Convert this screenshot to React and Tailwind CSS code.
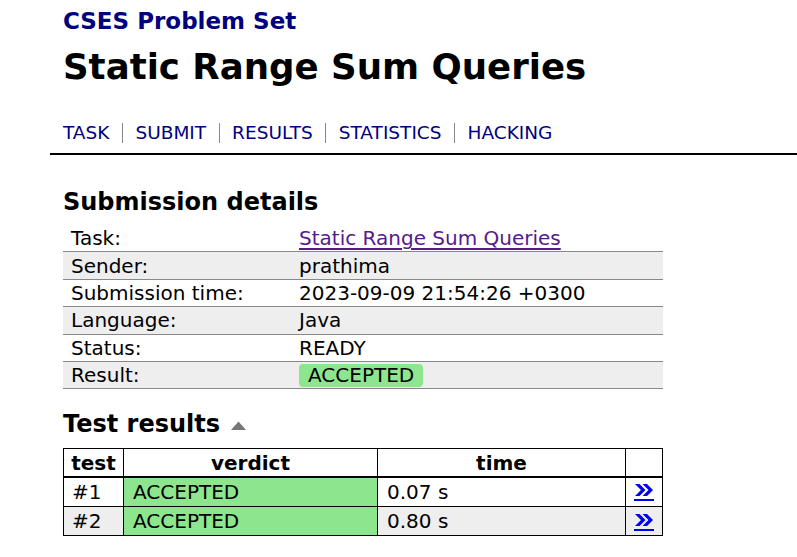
import React from "react";

const details = [
  ["Task:", "link"],
  ["Sender:", "prathima"],
  ["Submission time:", "2023-09-09 21:54:26 +0300"],
  ["Language:", "Java"],
  ["Status:", "READY"],
  ["Result:", "badge"],
];

const tests = [
  ["#1", "ACCEPTED", "0.07 s"],
  ["#2", "ACCEPTED", "0.80 s"],
];

const nav = ["TASK", "SUBMIT", "RESULTS", "STATISTICS", "HACKING"];

function Chevrons() {
  return (
    <div className="flex justify-center pt-[2px]">
      <span className="block border-b-2 border-[#0000ee] pb-[3px]">
        <svg width="20" height="12" viewBox="0 0 20 12" className="block">
          <path d="M1 0 L7 6 L1 12 H5.5 L11.5 6 L5.5 0 Z" fill="#0000ee" />
          <path d="M8.5 0 L14.5 6 L8.5 12 H13 L19 6 L13 0 Z" fill="#0000ee" />
        </svg>
      </span>
    </div>
  );
}

export default function App() {
  return (
    <div className="bg-white text-black min-h-[557px] font-['DejaVu_Sans','Verdana',sans-serif]">
      <div className="ml-[50px]">
        <div className="px-[13px] pt-[7px]">
          <div className="text-[23px] font-bold text-[#000080] leading-[28px]">CSES Problem Set</div>
          <h1 className="text-[35.6px] font-bold leading-[44px] mt-[10px]">Static Range Sum Queries</h1>
          <div className="flex items-center mt-[33px] h-[22px] text-[18.5px] leading-[22px] text-[#000080]">
            {nav.map((n, i) => (
              <React.Fragment key={n}>
                {i > 0 && <span className="w-px h-[20px] bg-[#888] mx-[12.5px]" />}
                <span>{n}</span>
              </React.Fragment>
            ))}
          </div>
        </div>
        <div className="h-[2px] bg-black mt-[9px]" />
        <div className="px-[13px]">
          <h2 className="text-[24px] font-bold leading-[30px] mt-[32px]">Submission details</h2>
          <div className="w-[600px] text-[20px] mt-[8px]">
            {details.map(([k, v], i) => (
              <div
                key={k}
                className={`flex items-center h-[27.4px] border-b border-[#888] ${i % 2 ? "bg-[#eeeeee]" : ""}`}
              >
                <div className="pl-[8px] w-[236px] leading-[24px]">{k}</div>
                <div className="leading-[24px]">
                  {v === "link" ? (
                    <span className="text-[#551a8b] underline underline-offset-[3px]">Static Range Sum Queries</span>
                  ) : v === "badge" ? (
                    <span className="inline-block bg-[#8de68d] rounded-[4px] px-[9px] leading-[23px]">ACCEPTED</span>
                  ) : (
                    v
                  )}
                </div>
              </div>
            ))}
          </div>
          <h2 className="text-[24px] font-bold leading-[30px] mt-[20px] flex items-center">
            Test results
            <svg width="15" height="9" viewBox="0 0 15 9" className="ml-[11px] mt-[2px]">
              <path d="M0 9 L7.5 0.5 L15 9 Z" fill="#777" />
            </svg>
          </h2>
          <table className="w-[600px] table-fixed text-[20px] leading-[22px] border-collapse mt-[9px] border border-black">
            <colgroup>
              <col className="w-[60px]" />
              <col className="w-[254px]" />
              <col className="w-[248px]" />
              <col />
            </colgroup>
            <thead>
              <tr className="h-[28px] border-b-2 border-black">
                <th className="border border-black font-bold p-0">test</th>
                <th className="border border-black font-bold p-0">verdict</th>
                <th className="border border-black font-bold p-0">time</th>
                <th className="border border-black p-0"></th>
              </tr>
            </thead>
            <tbody>
              {tests.map(([t, v, tm], i) => (
                <tr key={t} className={`h-[29.5px] ${i % 2 ? "bg-[#eeeeee]" : ""}`}>
                  <td className="border border-black pl-[8px] p-0">{t}</td>
                  <td className="border border-black bg-[#8de68d] pl-[9px] p-0">{v}</td>
                  <td className="border border-black pl-[9px] p-0">{tm}</td>
                  <td className="border border-black p-0">
                    <Chevrons />
                  </td>
                </tr>
              ))}
            </tbody>
          </table>
        </div>
      </div>
    </div>
  );
}
